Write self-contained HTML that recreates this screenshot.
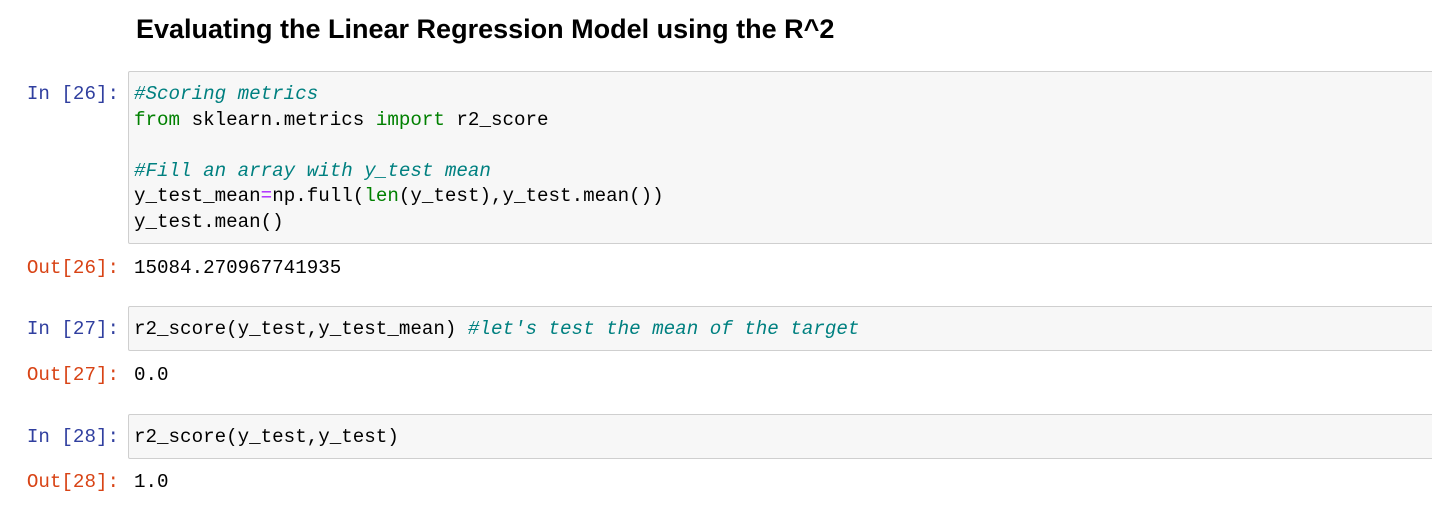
<!DOCTYPE html>
<html><head><style>
body{margin:0;width:1432px;height:509px;background:#fff;position:relative;overflow:hidden;font-family:"Liberation Mono",monospace;font-size:19.2px;}
.t{position:absolute;left:136px;top:14px;font-family:"Liberation Sans",sans-serif;font-weight:bold;font-size:27px;color:#000;}
.p{position:absolute;width:119px;text-align:right;line-height:25.5px;white-space:pre}
.in{color:#303f9f}.out{color:#d84315}
.box{position:absolute;left:128px;right:-2px;background:#f7f7f7;border:1px solid #cfcfcf;border-radius:2px;padding:10px 5px 6px;line-height:25.5px;white-space:pre;color:#000}
.o{position:absolute;left:134px;line-height:25.5px;white-space:pre;color:#000}
.c{color:#008080;font-style:italic}.k{color:#008000}.op{color:#aa22ff}
</style></head><body>
<div class="t">Evaluating the Linear Regression Model using the R^2</div>
<div class="p in" style="top:82px">In [26]:</div>
<div class="box" style="top:71px;height:155px"><span class="c">#Scoring metrics</span>
<span class="k">from</span> sklearn.metrics <span class="k">import</span> r2_score

<span class="c">#Fill an array with y_test mean</span>
y_test_mean<span class="op">=</span>np.full(<span class="k">len</span>(y_test),y_test.mean())
y_test.mean()</div>
<div class="p out" style="top:256px">Out[26]:</div>
<div class="o" style="top:256px">15084.270967741935</div>
<div class="p in" style="top:317px">In [27]:</div>
<div class="box" style="top:306px;height:27px">r2_score(y_test,y_test_mean) <span class="c">#let's test the mean of the target</span></div>
<div class="p out" style="top:363px">Out[27]:</div>
<div class="o" style="top:363px">0.0</div>
<div class="p in" style="top:425px">In [28]:</div>
<div class="box" style="top:414px;height:27px">r2_score(y_test,y_test)</div>
<div class="p out" style="top:470px">Out[28]:</div>
<div class="o" style="top:470px">1.0</div>
</body></html>
